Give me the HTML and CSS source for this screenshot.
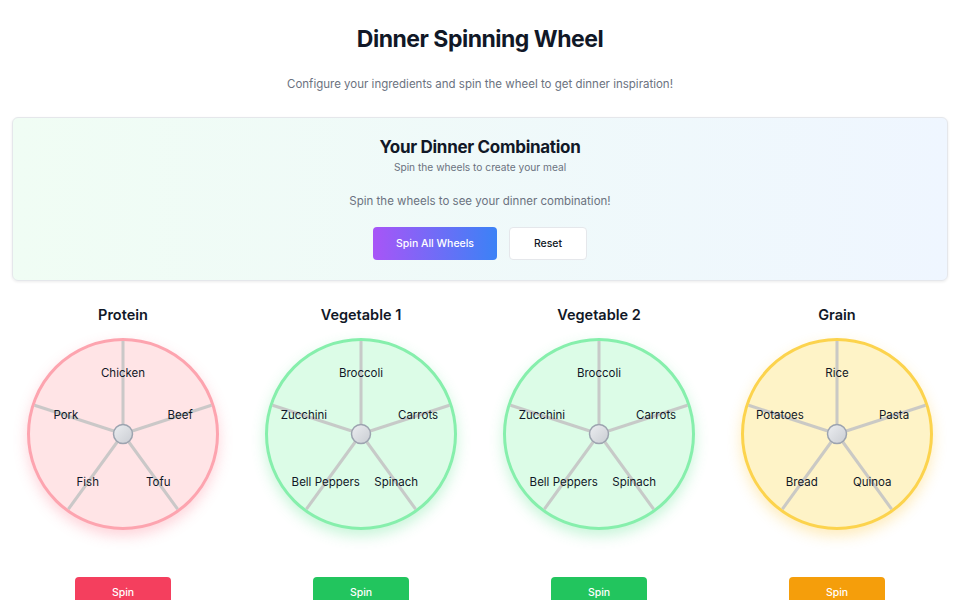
FILE: index.html
```html
<!DOCTYPE html>
<html lang="en">
<head>
  <meta charset="UTF-8" />
  <meta name="viewport" content="width=device-width, initial-scale=1" />
  <title>Dinner Spinning Wheel</title>
  <link rel="stylesheet" href="styles.css">
</head>
<body>
  <main class="page">
    <h1 class="page-title">Dinner Spinning Wheel</h1>
    <p class="page-sub">Configure your ingredients and spin the wheel to get dinner inspiration!</p>

    <!-- Result card -->
    <section class="combo-card">
      <h2 class="combo-title">Your Dinner Combination</h2>
      <p class="combo-sub">Spin the wheels to create your meal</p>
      <p class="combo-msg">Spin the wheels to see your dinner combination!</p>
      <div class="combo-actions">
        <button class="btn btn-gradient">Spin All Wheels</button>
        <button class="btn btn-outline">Reset</button>
      </div>
    </section>

    <!-- Wheels -->
    <section class="wheels" id="wheels"></section>
  </main>

  <script>
    const wheels = [
      { name: "Protein", theme: "rose", items: ["Chicken", "Beef", "Tofu", "Fish", "Pork"] },
      { name: "Vegetable 1", theme: "green", items: ["Broccoli", "Carrots", "Spinach", "Bell Peppers", "Zucchini"] },
      { name: "Vegetable 2", theme: "green", items: ["Broccoli", "Carrots", "Spinach", "Bell Peppers", "Zucchini"] },
      { name: "Grain", theme: "amber", items: ["Rice", "Pasta", "Quinoa", "Bread", "Potatoes"] }
    ];

    const size = 186;
    const c = size / 2;

    function wheelSvg(items) {
      const step = 360 / items.length;
      let spokes = "";
      let labels = "";
      items.forEach((item, i) => {
        const a = (-90 + i * step) * Math.PI / 180;
        spokes += `<line x1="${c}" y1="${c}" x2="${c + c * Math.cos(a)}" y2="${c + c * Math.sin(a)}" class="spoke"/>`;
        labels += `<text x="${c + 60 * Math.cos(a)}" y="${c + 60 * Math.sin(a)}" class="label">${item}</text>`;
      });
      return `<svg viewBox="0 0 ${size} ${size}" width="${size}" height="${size}">
        <defs>
          <linearGradient id="hub" x1="0" y1="0" x2="1" y2="1">
            <stop offset="0" stop-color="#eceef1"/>
            <stop offset="1" stop-color="#c9ccd2"/>
          </linearGradient>
        </defs>
        ${spokes}
        <circle cx="${c}" cy="${c}" r="9.5" fill="url(#hub)" stroke="#9ca3af" stroke-width="1.5"/>
        ${labels}
      </svg>`;
    }

    const container = document.getElementById("wheels");
    wheels.forEach(w => {
      const col = document.createElement("div");
      col.className = `wheel-col ${w.theme}`;
      col.innerHTML = `
        <h3 class="wheel-title">${w.name}</h3>
        <div class="wheel">${wheelSvg(w.items)}</div>
        <button class="btn btn-spin">Spin</button>`;
      container.appendChild(col);
    });
  </script>
</body>
</html>
```

FILE: styles.css
```css
body {
  margin: 0;
  font-family: Inter, "Noto Sans", sans-serif;
  color: #111827;
  background: #fff;
}

.page {
  padding: 24px 12px 0;
}

.page-title {
  margin: 0;
  text-align: center;
  font-size: 23px;
  font-weight: 700;
  letter-spacing: -0.5px;
  line-height: 30px;
}

.page-sub {
  margin: 22px 0 0;
  text-align: center;
  font-size: 11.5px;
  color: #6b7280;
  line-height: 16px;
}

/* Result card */
.combo-card {
  margin-top: 25px;
  border: 1px solid #e5e7eb;
  border-radius: 6px;
  background: linear-gradient(90deg, #f0fdf4, #eff6ff);
  box-shadow: 0 1px 3px rgba(0, 0, 0, 0.08);
  padding: 17px 16px 20px;
  text-align: center;
}

.combo-title {
  margin: 0;
  font-size: 17px;
  font-weight: 700;
  letter-spacing: -0.3px;
  line-height: 24px;
}

.combo-sub {
  margin: 0;
  font-size: 10.2px;
  color: #6b7280;
  line-height: 16px;
}

.combo-msg {
  margin: 18px 0 0;
  font-size: 11.5px;
  color: #6b7280;
  line-height: 16px;
}

.combo-actions {
  display: flex;
  justify-content: center;
  gap: 12px;
  margin-top: 18px;
}

.btn {
  font-family: inherit;
  font-size: 10.5px;
  font-weight: 500;
  border-radius: 4px;
  cursor: pointer;
}

.btn-gradient {
  width: 124px;
  height: 33px;
  border: none;
  color: #fff;
  background: linear-gradient(90deg, #a855f7, #3b82f6);
}

.btn-outline {
  width: 78px;
  height: 33px;
  border: 1px solid #e5e7eb;
  background: #fff;
  color: #111827;
}

/* Wheels */
.wheels {
  display: grid;
  grid-template-columns: repeat(4, 1fr);
  gap: 16px;
  margin-top: 24px;
}

.wheel-col {
  display: flex;
  flex-direction: column;
  align-items: center;
}

.wheel-title {
  margin: 0;
  font-size: 14.5px;
  font-weight: 600;
  line-height: 20px;
}

.wheel {
  margin-top: 13px;
  width: 186px;
  height: 186px;
  border: 3px solid;
  border-radius: 50%;
}

.wheel svg {
  display: block;
}

.spoke {
  stroke: #c4c4c4;
  stroke-opacity: 0.9;
  stroke-width: 3;
}

.label {
  font-family: Inter, "Noto Sans", sans-serif;
  font-size: 11.5px;
  fill: #111827;
  text-anchor: middle;
  dominant-baseline: middle;
}

.btn-spin {
  margin-top: 47px;
  width: 96px;
  height: 30px;
  border: none;
  color: #fff;
}

.rose .wheel {
  border-color: #fda4af;
  background: #ffe4e6;
  box-shadow: 0 6px 14px rgba(251, 113, 133, 0.3);
}
.rose .btn-spin { background: #f43f5e; }

.green .wheel {
  border-color: #86efac;
  background: #dcfce7;
  box-shadow: 0 6px 14px rgba(74, 222, 128, 0.3);
}
.green .btn-spin { background: #22c55e; }

.amber .wheel {
  border-color: #fcd34d;
  background: #fef3c7;
  box-shadow: 0 6px 14px rgba(251, 191, 36, 0.3);
}
.amber .btn-spin { background: #f59e0b; }
```
